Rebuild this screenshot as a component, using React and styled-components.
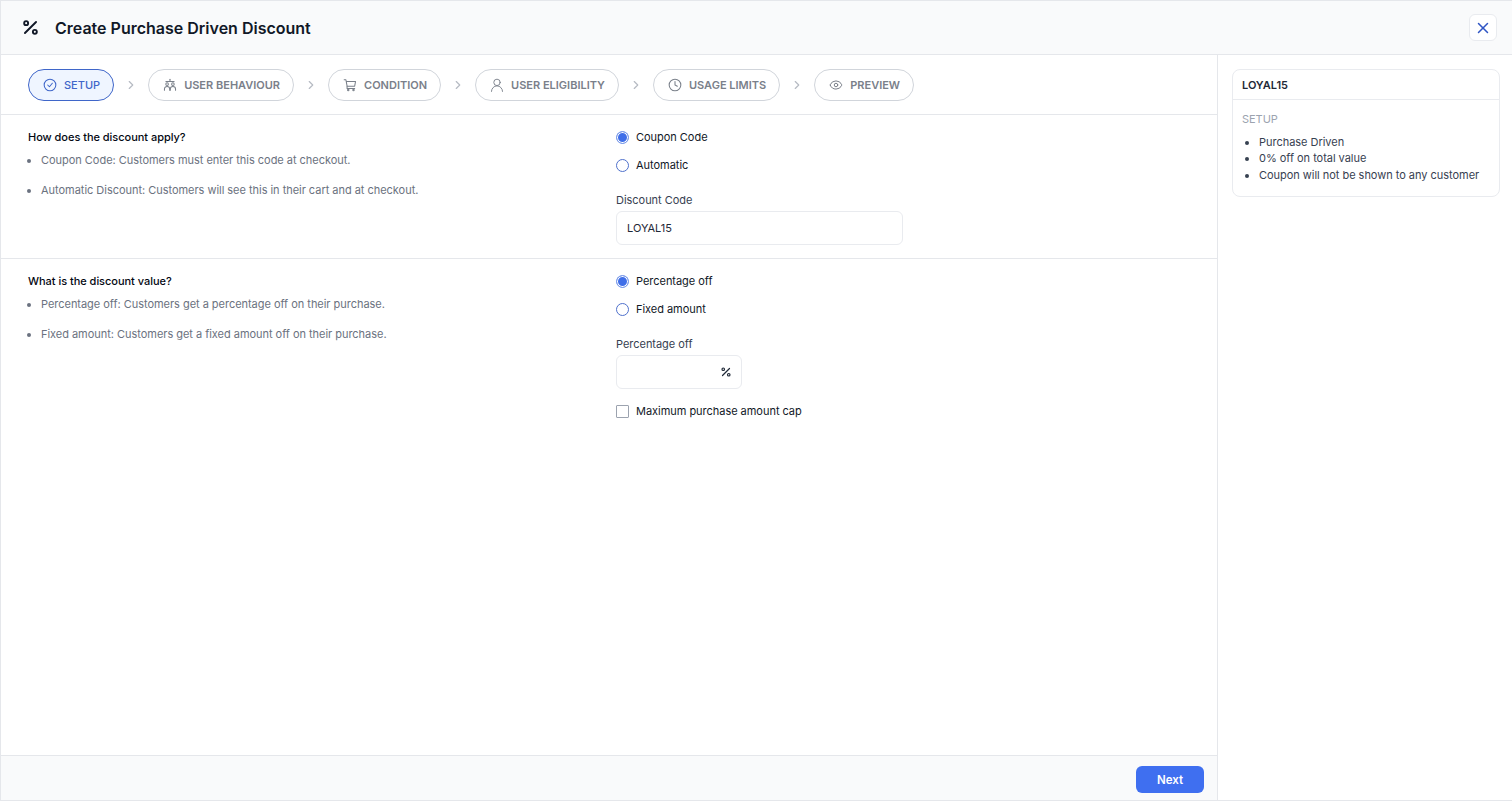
import React from 'react';
import styled, { createGlobalStyle } from 'styled-components';
import { ChevronRight, Clock, Eye, Percent, X } from 'lucide-react';

const GlobalStyle = createGlobalStyle`
  * { box-sizing: border-box; }
  html, body { margin: 0; padding: 0; height: 100%; }
  body {
    font-family: Inter, "Noto Sans", "Liberation Sans", sans-serif;
    font-size: 11px;
    letter-spacing: -0.03px;
    color: #111827;
    background: #fff;
  }
`;

const Page = styled.div`
  width: 1512px;
  height: 801px;
  display: flex;
  flex-direction: column;
  border: 1px solid #e5e7eb;
  border-right: 0;
  overflow: hidden;
`;

const Header = styled.header`
  height: 54px;
  flex: none;
  display: flex;
  align-items: center;
  padding: 0 15px 0 20px;
  gap: 15px;
  background: #f9fafb;
  border-bottom: 1px solid #e5e7eb;
`;

const Title = styled.h1`
  flex: 1;
  margin: 0;
  font-size: 16px;
  line-height: 24px;
  font-weight: 600;
  letter-spacing: 0;
  color: #111827;
`;

const CloseButton = styled.button`
  width: 28px;
  height: 27px;
  padding: 0;
  display: flex;
  align-items: center;
  justify-content: center;
  background: #fff;
  color: #2f55c4;
  border: 1px solid #e9ebef;
  border-radius: 6px;
`;

const Body = styled.div`
  flex: 1;
  min-height: 0;
  display: flex;
`;

const Main = styled.main`
  width: 1217px;
  flex: none;
  display: flex;
  flex-direction: column;
  border-right: 1px solid #e5e7eb;
`;

const Stepper = styled.nav`
  height: 60px;
  flex: none;
  display: flex;
  align-items: center;
  padding-left: 27px;
  gap: 10px;
  border-bottom: 1px solid #e5e7eb;
`;

const Step = styled.div`
  height: 32px;
  display: flex;
  align-items: center;
  gap: 7px;
  padding: 0 13px 0 14px;
  border-radius: 16px;
  font-size: 11px;
  letter-spacing: 0;
  font-weight: ${(props) => (props.$active ? 500 : 600)};
  border: 1px solid ${(props) => (props.$active ? '#3f66c9' : '#d1d5db')};
  background: ${(props) => (props.$active ? '#eff5ff' : '#fff')};
  color: ${(props) => (props.$active ? '#3f66c9' : '#7a808a')};
`;

const Arrow = styled.span`
  display: flex;
  color: #b6bbc3;
`;

const Section = styled.section`
  display: grid;
  grid-template-columns: 588px 1fr;
  padding: 14px 27px 13px;
  border-bottom: ${(props) => (props.$last ? '0' : '1px solid #e5e7eb')};
  flex: ${(props) => (props.$last ? 1 : 'none')};
`;

const Question = styled.h2`
  margin: 0 0 7px;
  font-size: 11px;
  line-height: 16px;
  font-weight: 500;
  color: #030712;
`;

const Notes = styled.ul`
  margin: 0;
  padding: 0 0 0 13px;
  list-style: disc;
  color: #6b7280;
  font-size: 11px;
  line-height: 16px;

  li { margin-bottom: 14px; }
`;

const Controls = styled.div`
  display: flex;
  flex-direction: column;
`;

const RadioRow = styled.label`
  height: 16px;
  margin-bottom: 12px;
  display: flex;
  align-items: center;
  gap: 7px;
  font-size: 11px;
  color: #111827;
`;

const RadioDot = styled.span`
  width: 13px;
  height: 13px;
  flex: none;
  border-radius: 50%;
  border: 1.5px solid ${(props) => (props.$on ? '#7c9be8' : '#4f71cc')};
  background: ${(props) => (props.$on ? '#3f6ee8' : '#fff')};
  box-shadow: ${(props) => (props.$on ? 'inset 0 0 0 1px #fff' : 'none')};
`;

const FieldLabel = styled.div`
  margin-top: 7px;
  margin-bottom: 3px;
  font-size: 11px;
  line-height: 16px;
  color: #374151;
`;

const InputBox = styled.div`
  width: ${(props) => props.$width}px;
  height: 34px;
  display: flex;
  align-items: center;
  justify-content: space-between;
  padding: 0 9px 0 10px;
  border: 1px solid #e9ebef;
  border-radius: 6px;
  font-size: 11px;
  color: #1f2937;
`;

const CheckRow = styled.label`
  margin-top: 14px;
  height: 16px;
  display: flex;
  align-items: center;
  gap: 7px;
  font-size: 11px;
  color: #111827;
`;

const CheckBox = styled.span`
  width: 13px;
  height: 13px;
  flex: none;
  background: #fff;
  border: 1px solid #9ca3af;
  border-radius: 1px;
`;

const Footer = styled.footer`
  height: 45px;
  flex: none;
  display: flex;
  align-items: center;
  justify-content: flex-end;
  padding: 3px 13px 0 0;
  background: #f9fafb;
  border-top: 1px solid #e5e7eb;
`;

const NextButton = styled.button`
  width: 68px;
  height: 27px;
  border: 0;
  border-radius: 6px;
  background: #3f6ff0;
  color: #fff;
  font-family: inherit;
  font-size: 11.5px;
  font-weight: 600;
`;

const Aside = styled.aside`
  flex: 1;
  padding: 14px 12px 0 14px;
`;

const SummaryCard = styled.div`
  border: 1px solid #e9ebef;
  border-radius: 8px;
`;

const SummaryHead = styled.div`
  height: 30px;
  display: flex;
  align-items: center;
  padding: 0 9px;
  font-size: 11px;
  font-weight: 600;
  color: #1f2937;
  border-bottom: 1px solid #e9ebef;
`;

const SummaryBody = styled.div`
  padding: 11px 9px 12.8px;
`;

const SummaryStep = styled.div`
  margin-bottom: 6.7px;
  font-size: 11px;
  line-height: 16px;
  color: #9ca3af;
`;

const SummaryList = styled.ul`
  margin: 0;
  padding-left: 17px;
  list-style: disc;
  font-size: 11px;
  line-height: 16.5px;
  color: #374151;
`;

const iconProps = {
  viewBox: '0 0 24 24',
  fill: 'none',
  stroke: 'currentColor',
  strokeWidth: 1.8,
  strokeLinecap: 'round',
  strokeLinejoin: 'round',
};

function SetupIcon() {
  return (
    <svg width="14" height="14" {...iconProps}>
      <circle cx="12" cy="12" r="10" />
      <path d="m8 12 3 3 5-6" />
    </svg>
  );
}

function BehaviourIcon() {
  return (
    <svg width="14" height="14" {...iconProps}>
      <path d="M12 2v3" />
      <path d="M5 6h14" />
      <circle cx="7" cy="10.5" r="2.2" />
      <circle cx="17" cy="10.5" r="2.2" />
      <path d="M2.5 21v-2A4.5 4.5 0 0 1 7 14.5a4.5 4.5 0 0 1 4.5 4.5v2" />
      <path d="M12.5 21v-2a4.5 4.5 0 0 1 4.5-4.5 4.5 4.5 0 0 1 4.5 4.5v2" />
    </svg>
  );
}

function CartIcon() {
  return (
    <svg width="14" height="14" {...iconProps}>
      <path d="M2 3h3l2 11h13l1.5-8H5.6" />
      <path d="M7 14v4h13" />
      <circle cx="9" cy="20.5" r="1.2" />
      <circle cx="18" cy="20.5" r="1.2" />
    </svg>
  );
}

function UserIcon() {
  return (
    <svg width="14" height="14" {...iconProps} strokeWidth={1.6}>
      <circle cx="12" cy="7.5" r="5.5" />
      <path d="M2.5 23a9.5 9.5 0 0 1 19 0" />
    </svg>
  );
}

const steps = [
  { label: 'SETUP', icon: <SetupIcon />, active: true },
  { label: 'USER BEHAVIOUR', icon: <BehaviourIcon /> },
  { label: 'CONDITION', icon: <CartIcon /> },
  { label: 'USER ELIGIBILITY', icon: <UserIcon /> },
  { label: 'USAGE LIMITS', icon: <Clock size={14} strokeWidth={1.8} /> },
  { label: 'PREVIEW', icon: <Eye size={14} strokeWidth={1.7} /> },
];

function Radio({ on, children }) {
  return (
    <RadioRow>
      <RadioDot $on={on} />
      {children}
    </RadioRow>
  );
}

export default function App() {
  return (
    <>
      <GlobalStyle />
      <Page>
        <Header>
          <Percent size={19} strokeWidth={2.4} />
          <Title>Create Purchase Driven Discount</Title>
          <CloseButton>
            <X size={18} strokeWidth={2} />
          </CloseButton>
        </Header>
        <Body>
          <Main>
            <Stepper>
              {steps.map((step, i) => (
                <React.Fragment key={step.label}>
                  {i > 0 && (
                    <Arrow>
                      <ChevronRight size={14} />
                    </Arrow>
                  )}
                  <Step $active={step.active}>
                    {step.icon}
                    {step.label}
                  </Step>
                </React.Fragment>
              ))}
            </Stepper>

            <Section>
              <div>
                <Question>How does the discount apply?</Question>
                <Notes>
                  <li>Coupon Code: Customers must enter this code at checkout.</li>
                  <li>Automatic Discount: Customers will see this in their cart and at checkout.</li>
                </Notes>
              </div>
              <Controls>
                <Radio on>Coupon Code</Radio>
                <Radio>Automatic</Radio>
                <FieldLabel>Discount Code</FieldLabel>
                <InputBox $width={287}>LOYAL15</InputBox>
              </Controls>
            </Section>

            <Section $last>
              <div>
                <Question>What is the discount value?</Question>
                <Notes>
                  <li>Percentage off: Customers get a percentage off on their purchase.</li>
                  <li>Fixed amount: Customers get a fixed amount off on their purchase.</li>
                </Notes>
              </div>
              <Controls>
                <Radio on>Percentage off</Radio>
                <Radio>Fixed amount</Radio>
                <FieldLabel>Percentage off</FieldLabel>
                <InputBox $width={126}>
                  <span />
                  <Percent size={12} strokeWidth={2.4} />
                </InputBox>
                <CheckRow>
                  <CheckBox />
                  Maximum purchase amount cap
                </CheckRow>
              </Controls>
            </Section>

            <Footer>
              <NextButton>Next</NextButton>
            </Footer>
          </Main>

          <Aside>
            <SummaryCard>
              <SummaryHead>LOYAL15</SummaryHead>
              <SummaryBody>
                <SummaryStep>SETUP</SummaryStep>
                <SummaryList>
                  <li>Purchase Driven</li>
                  <li>0% off on total value</li>
                  <li>Coupon will not be shown to any customer</li>
                </SummaryList>
              </SummaryBody>
            </SummaryCard>
          </Aside>
        </Body>
      </Page>
    </>
  );
}
